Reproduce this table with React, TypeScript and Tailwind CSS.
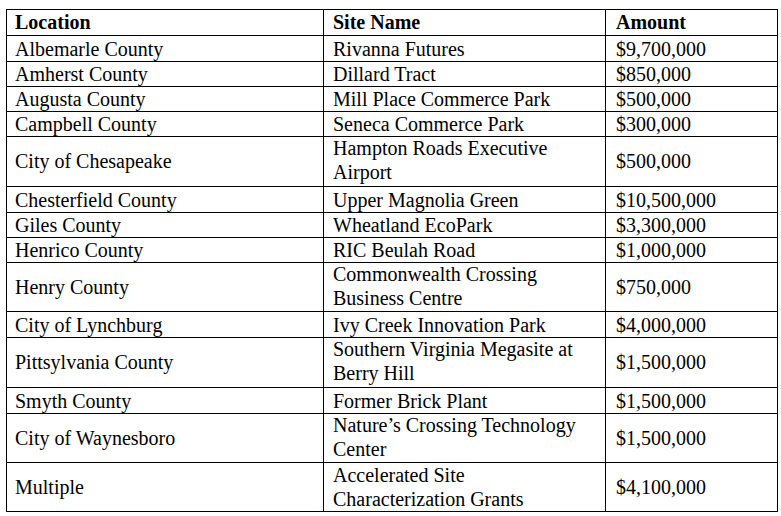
import React from "react";

type Row = { loc: string; site: string[]; amount: string; h: string };

const rows: Row[] = [
  { loc: "Albemarle County", site: ["Rivanna Futures"], amount: "$9,700,000", h: "h-[25px]" },
  { loc: "Amherst County", site: ["Dillard Tract"], amount: "$850,000", h: "h-[25px]" },
  { loc: "Augusta County", site: ["Mill Place Commerce Park"], amount: "$500,000", h: "h-[25px]" },
  { loc: "Campbell County", site: ["Seneca Commerce Park"], amount: "$300,000", h: "h-[25px]" },
  { loc: "City of Chesapeake", site: ["Hampton Roads Executive", "Airport"], amount: "$500,000", h: "h-[51px]" },
  { loc: "Chesterfield County", site: ["Upper Magnolia Green"], amount: "$10,500,000", h: "h-[25px]" },
  { loc: "Giles County", site: ["Wheatland EcoPark"], amount: "$3,300,000", h: "h-[25px]" },
  { loc: "Henrico County", site: ["RIC Beulah Road"], amount: "$1,000,000", h: "h-[25px]" },
  { loc: "Henry County", site: ["Commonwealth Crossing", "Business Centre"], amount: "$750,000", h: "h-[50px]" },
  { loc: "City of Lynchburg", site: ["Ivy Creek Innovation Park"], amount: "$4,000,000", h: "h-[25px]" },
  { loc: "Pittsylvania County", site: ["Southern Virginia Megasite at", "Berry Hill"], amount: "$1,500,000", h: "h-[51px]" },
  { loc: "Smyth County", site: ["Former Brick Plant"], amount: "$1,500,000", h: "h-[25px]" },
  { loc: "City of Waynesboro", site: ["Nature\u2019s Crossing Technology", "Center"], amount: "$1,500,000", h: "h-[50px]" },
  { loc: "Multiple", site: ["Accelerated Site", "Characterization Grants"], amount: "$4,100,000", h: "h-[49px]" },
];

const cols = "grid grid-cols-[317px_282px_172px]";
const cell = "border-r border-b border-black whitespace-nowrap";

export default function App() {
  return (
    <div className="min-h-[516px] bg-white pt-[9px] pl-[6px] text-black font-['Liberation_Serif',serif] text-[20px] leading-[24px]">
      <div className="w-fit border-l border-t border-black">
        <div className={`${cols} h-[26px] font-bold`}>
          <div className={`${cell} pl-[8px]`}>Location</div>
          <div className={`${cell} pl-[9px]`}>Site Name</div>
          <div className={`${cell} pl-[10px]`}>Amount</div>
        </div>
        {rows.map((r) => {
          const tall = r.site.length > 1;
          return (
            <div key={r.loc} className={`${cols} ${r.h}`}>
              <div className={`${cell} pl-[8px] flex ${tall ? "items-center" : "items-start pt-[1px]"}`}>{r.loc}</div>
              <div className={`${cell} pl-[9px] ${tall ? "pt-0" : "pt-[1px]"}`}>
                {r.site.map((s) => (
                  <div key={s}>{s}</div>
                ))}
              </div>
              <div className={`${cell} pl-[10px] flex ${tall ? "items-center" : "items-start pt-[1px]"}`}>{r.amount}</div>
            </div>
          );
        })}
      </div>
    </div>
  );
}
